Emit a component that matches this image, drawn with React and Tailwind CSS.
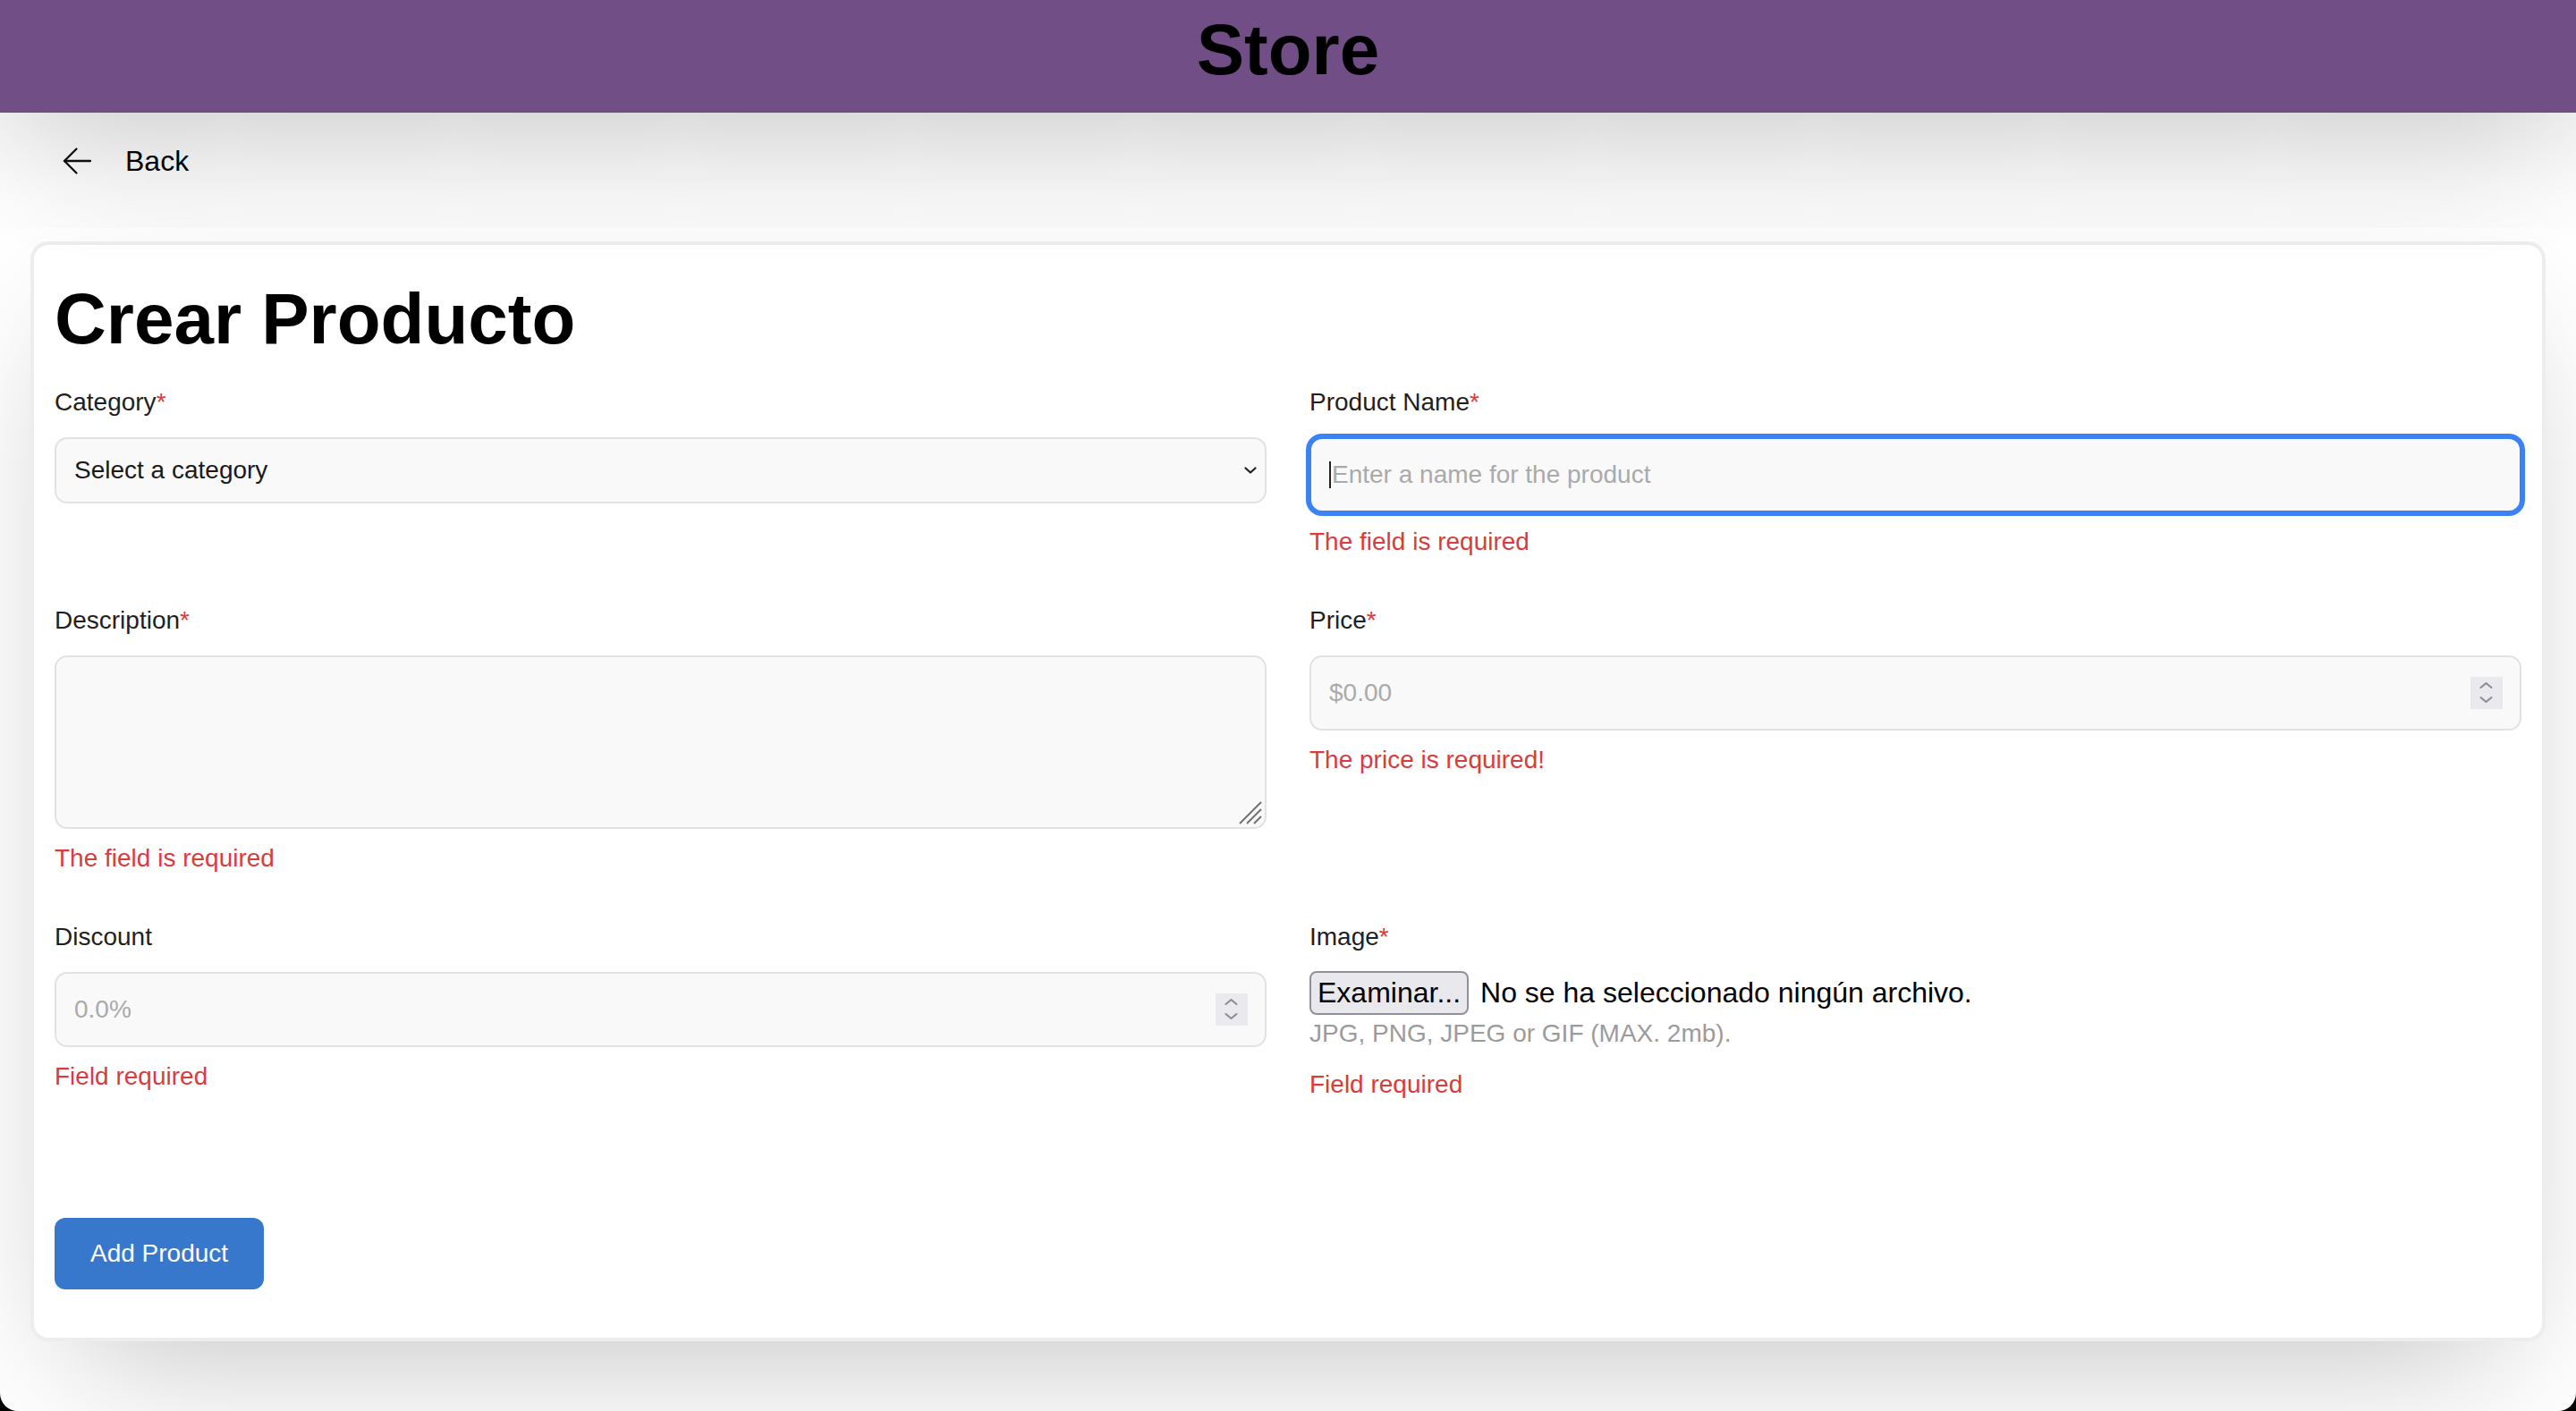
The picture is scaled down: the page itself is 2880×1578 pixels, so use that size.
import React from 'react';

const FONT = "font-['Liberation_Sans',Arial,Helvetica,sans-serif]";

function Label({ text, required }) {
  return (
    <div className="text-[28px] leading-[42px] text-[#1f1f1f]">
      {text}
      {required && <span className="text-[#d93c3c]">*</span>}
    </div>
  );
}

function ErrorText({ children, className = 'mt-[12px]' }) {
  return <div className={`${className} text-[28px] leading-[42px] text-[#d93c3c]`}>{children}</div>;
}

function Spinner() {
  return (
    <div className="w-[36px] h-[36px] bg-[#e9e9ee] shrink-0">
      <svg width="36" height="36" viewBox="0 0 36 36" fill="none" stroke="#8a8a96" strokeWidth="2" strokeLinecap="round" strokeLinejoin="round">
        <path d="M11.5 12 L17.5 7 L23.5 12" />
        <path d="M11.5 23 L17.5 28 L23.5 23" />
      </svg>
    </div>
  );
}

function NumberField({ placeholder }) {
  return (
    <div className="mt-[18px] h-[84px] flex items-center justify-between bg-[#f9f9f9] border-2 border-[#e2e2e2] rounded-[14px] pl-[20px] pr-[19px]">
      <span className="text-[28px] text-[#aaaaaa]">{placeholder}</span>
      <Spinner />
    </div>
  );
}

export default function App() {
  return (
    <div className={`bg-black h-[1578px] ${FONT}`}>
      <div className="relative h-full bg-white rounded-b-[20px] overflow-hidden">
        <header className="relative z-10 h-[126px] bg-[#724e87] flex items-center justify-center pb-[15px] shadow-[0_14px_160px_0_rgba(0,0,0,0.28)]">
          <h1 className="text-[80px] leading-[80px] font-bold text-black">Store</h1>
        </header>

        <div className="h-[108px] flex items-center gap-[38px] pl-[70px]">
          <svg width="32" height="30" viewBox="0 0 32 30" fill="none" stroke="#111111" strokeWidth="2.3" strokeLinecap="round" strokeLinejoin="round">
            <path d="M15.5 1.5 L2 15 L15.5 28.5" />
            <path d="M2 15 H31" />
          </svg>
          <span className="text-[32px] leading-none text-black">Back</span>
        </div>

        <main className="mx-[34px] mt-[36px] bg-white border-4 border-[#ededed] rounded-[20px] px-[23px] pt-[43px] pb-[54px] shadow-[0_60px_160px_-50px_rgba(0,0,0,0.26)]">
          <h2 className="text-[80px] leading-[80px] font-bold text-black">Crear Producto</h2>

          <div className="mt-[32px] grid grid-cols-2 gap-x-[48px] gap-y-[46px] items-start">
            {/* Category */}
            <div className="flex flex-col">
              <Label text="Category" required />
              <div className="mt-[18px] h-[74px] flex items-center justify-between bg-[#f9f9f9] border-2 border-[#e2e2e2] rounded-[14px] pl-[20px] pr-[9px]">
                <span className="text-[28px] text-[#1a1a1a]">Select a category</span>
                <svg width="14" height="8" viewBox="0 0 14 8" fill="none" stroke="#222222" strokeWidth="2.2" strokeLinecap="round" strokeLinejoin="round">
                  <path d="M1.5 1.5 L7 6.5 L12.5 1.5" />
                </svg>
              </div>
            </div>

            {/* Product name */}
            <div className="flex flex-col">
              <Label text="Product Name" required />
              <div className="mt-[18px] h-[84px] flex items-center bg-[#f9f9f9] border-2 border-[#3b82f6] ring-4 ring-[#3b82f6] rounded-[14px] pl-[20px]">
                <span className="w-[2px] h-[30px] bg-[#222222] mr-[1px]" />
                <span className="text-[28px] text-[#aaaaaa]">Enter a name for the product</span>
              </div>
              <ErrorText>The field is required</ErrorText>
            </div>

            {/* Description */}
            <div className="flex flex-col">
              <Label text="Description" required />
              <div className="relative mt-[18px] h-[194px] bg-[#f9f9f9] border-2 border-[#e2e2e2] rounded-[14px]">
                <svg className="absolute right-[2px] bottom-[2px]" width="28" height="28" viewBox="0 0 28 28" fill="none" stroke="#707070" strokeWidth="2">
                  <path d="M2 26 L26 2" />
                  <path d="M10 26 L26 10" />
                  <path d="M18 26 L26 18" />
                </svg>
              </div>
              <ErrorText>The field is required</ErrorText>
            </div>

            {/* Price */}
            <div className="flex flex-col">
              <Label text="Price" required />
              <NumberField placeholder="$0.00" />
              <ErrorText>The price is required!</ErrorText>
            </div>

            {/* Discount */}
            <div className="flex flex-col">
              <Label text="Discount" />
              <NumberField placeholder="0.0%" />
              <ErrorText>Field required</ErrorText>
            </div>

            {/* Image */}
            <div className="flex flex-col">
              <Label text="Image" required />
              <div className="mt-[16px] h-[50px] flex items-center">
                <span className="h-[49px] flex items-center px-[7px] bg-[#e9e9ed] border-2 border-[#8f8f9d] rounded-[8px] text-[32px] leading-none text-black">
                  Examinar...
                </span>
                <span className="ml-[13px] text-[32px] leading-none text-black">No se ha seleccionado ningún archivo.</span>
              </div>
              <div className="text-[28px] leading-[42px] text-[#9b9b9b]">JPG, PNG, JPEG or GIF (MAX. 2mb).</div>
              <ErrorText className="mt-[15px]">Field required</ErrorText>
            </div>
          </div>

          <button className="mt-[128px] h-[80px] px-[40px] bg-[#3878cc] rounded-[12px] text-white text-[28px] leading-none">
            Add Product
          </button>
        </main>
      </div>
    </div>
  );
}
